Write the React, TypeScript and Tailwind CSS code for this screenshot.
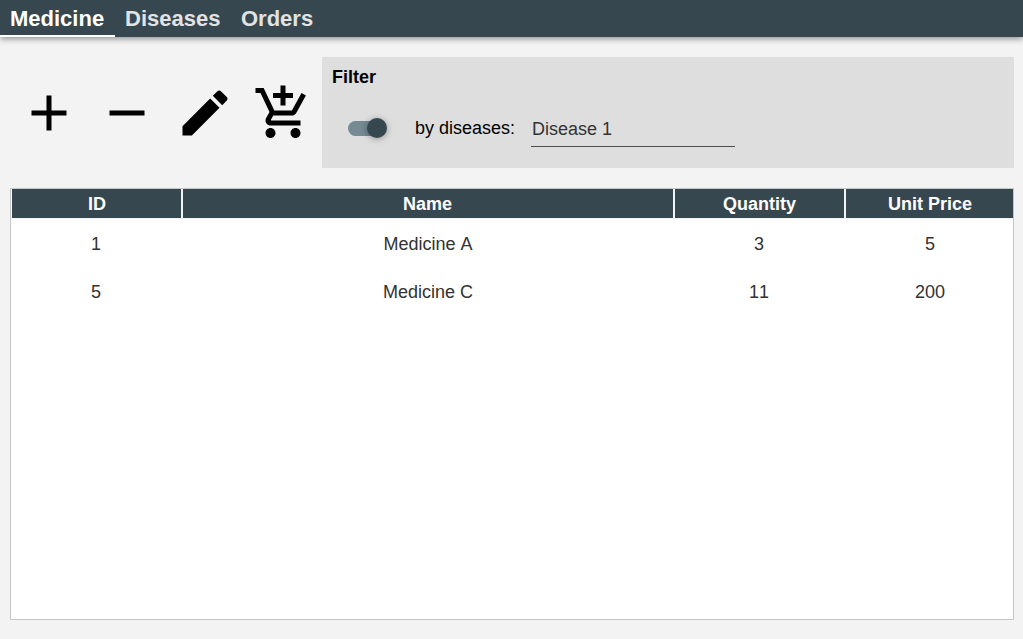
import React from "react";

const tabs = ["Medicine", "Diseases", "Orders"];

const icons = [
  { name: "Add", d: "M19 13h-6v6h-2v-6H5v-2h6V5h2v6h6v2z" },
  { name: "Remove", d: "M19 13H5v-2h14v2z" },
  {
    name: "Edit",
    d: "M3 17.25V21h3.75L17.81 9.94l-3.75-3.75L3 17.25zM20.71 7.04c.39-.39.39-1.02 0-1.41l-2.34-2.34c-.39-.39-1.02-.39-1.41 0l-1.83 1.83 3.75 3.75 1.83-1.83z",
  },
  {
    name: "Add to cart",
    d: "M11 9h2V6h3V4h-3V1h-2v3H8v2h3v3zm-4 9c-1.1 0-1.99.9-1.99 2S5.9 22 7 22s2-.9 2-2-.9-2-2-2zm10 0c-1.1 0-1.99.9-1.99 2s.89 2 1.99 2 2-.9 2-2-.9-2-2-2zm-9.83-3.25l.03-.12.9-1.63h7.45c.75 0 1.41-.41 1.75-1.03l3.86-7.01L19.42 4h-.01l-1.1 2-2.76 5H8.53l-.13-.27L6.16 6l-.95-2-.94-2H1v2h2l3.6 7.59-1.35 2.45c-.16.28-.25.61-.25.96 0 1.1.9 2 2 2h12v-2H7.42c-.13 0-.25-.11-.25-.25z",
  },
];

const columns = ["ID", "Name", "Quantity", "Unit Price"];
const rows = [
  ["1", "Medicine A", "3", "5"],
  ["5", "Medicine C", "11", "200"],
];

export default function App() {
  return (
    <div className="flex h-[639px] w-[1023px] flex-col overflow-hidden bg-[#f3f3f3] font-['Liberation_Sans',Arial,sans-serif] text-[18px] text-black [font-kerning:none]">
      <nav className="flex h-[37px] shrink-0 bg-[#37474f] text-[22px] font-bold shadow-[0_2px_6px_rgba(0,0,0,0.4)]">
        {tabs.map((tab, i) => (
          <button
            key={tab}
            className={
              i === 0
                ? "h-full w-[115px] border-b-2 border-white pl-[10px] pt-px text-left leading-[36px] text-white"
                : "h-full w-[116px] border-b-2 border-transparent pl-[10px] pt-px text-left leading-[36px] text-[#e1e3e5]"
            }
          >
            {tab}
          </button>
        ))}
      </nav>

      <div className="mt-5 flex h-[111px] shrink-0 pr-[9px]">
        <div className="flex w-[322px] items-center gap-[18px] pl-[19px]">
          {icons.map((icon) => (
            <button key={icon.name} aria-label={icon.name} className="shrink-0">
              <svg viewBox="0 0 24 24" className="block size-[60px] fill-black">
                <path d={icon.d} />
              </svg>
            </button>
          ))}
        </div>
        <section className="flex-1 bg-[#dedede] px-[10px] pt-[10px]">
          <h2 className="h-[20px] font-bold leading-[20px]">Filter</h2>
          <div className="mt-[22px] flex h-[38px] items-start pl-4">
            <span className="mt-[9px] flex h-[20px] w-[39px] items-center">
              <span className="h-[15px] w-[30px] shrink-0 rounded-full bg-[#758a93]" />
              <span className="-ml-[11.5px] size-[20px] shrink-0 rounded-full bg-[#37474f] shadow-[0_1px_6px_rgba(0,0,0,0.35)]" />
            </span>
            <label className="ml-[28px] mt-[9px] w-[116px] leading-[20px]">by diseases:</label>
            <div className="h-full w-[204px] border-b border-[#4d4d4d] pl-px pt-[10px] leading-[20px] text-[#333333]">
              Disease 1
            </div>
          </div>
        </section>
      </div>

      <div className="ml-[10px] mt-5 flex h-[432px] w-[1004px] shrink-0 flex-col overflow-hidden border border-[#c5c7c7] bg-white">
        <div className="grid h-[30px] shrink-0 grid-cols-[172px_492px_171px_167px] border-b border-[#f3f3f3] bg-[#37474f] text-center font-bold leading-[30px] text-white">
          {columns.map((c, i) => (
            <div
              key={c}
              className={
                i === 0
                  ? "border-l border-r-2 border-white border-r-[#f3f3f3] pl-px"
                  : i === 1
                    ? "border-r-2 border-[#f3f3f3] pr-px"
                    : i === 2
                      ? "border-r-2 border-[#f3f3f3]"
                      : "pl-px"
              }
            >
              {c}
            </div>
          ))}
        </div>
        {rows.map((row) => (
          <div
            key={row[0]}
            className="grid h-[48px] grid-cols-[170px_492px_172px_170px] text-center leading-[50px] text-[#323232]"
          >
            {row.map((cell, i) => (
              <div key={i} className={i === 1 ? "pl-[2px]" : ""}>
                {cell}
              </div>
            ))}
          </div>
        ))}
      </div>
    </div>
  );
}
